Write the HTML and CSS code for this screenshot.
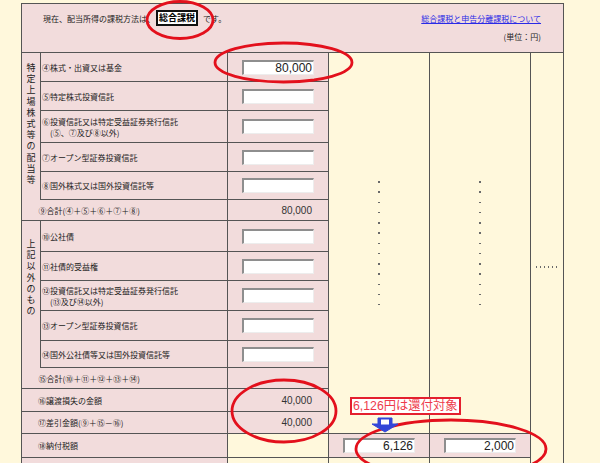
FILE: index.html
```html
<!DOCTYPE html>
<html lang="ja">
<head>
<meta charset="utf-8">
<title>配当所得</title>
<link rel="stylesheet" href="styles.css">
</head>
<body>
<table class="sheet">
  <colgroup>
    <col class="c1"><col class="c2"><col class="c3"><col class="c4"><col class="c5"><col class="c6">
  </colgroup>
  <tr class="h49">
    <td colspan="6" class="head">
      <div class="head-row">
        <p class="status">現在、配当所得の課税方法は、<span class="method">総合課税</span>です。</p>
        <a class="link" href="#">総合課税と申告分離課税について</a>
      </div>
      <div class="unit">(単位：円)</div>
    </td>
  </tr>
  <tr class="h29">
    <td rowspan="6" class="grp grp1"><span class="vlabel">特定上場株式等の配当等</span></td>
    <td class="item">④株式・出資又は基金</td>
    <td class="amt-cell"><input class="amt" type="text" value="80,000" readonly></td>
    <td rowspan="14" class="blank"><span class="vdots"></span></td>
    <td rowspan="14" class="blank"><span class="vdots"></span></td>
    <td rowspan="16" class="blank"><span class="hdots"></span></td>
  </tr>
  <tr class="h29">
    <td class="item">⑤特定株式投資信託</td>
    <td class="amt-cell"><input class="amt" type="text" value="" readonly></td>
  </tr>
  <tr class="h32">
    <td class="item">⑥投資信託又は特定受益証券発行信託<br>　(⑤、⑦及び⑧以外)</td>
    <td class="amt-cell"><input class="amt" type="text" value="" readonly></td>
  </tr>
  <tr class="h29">
    <td class="item">⑦オープン型証券投資信託</td>
    <td class="amt-cell"><input class="amt" type="text" value="" readonly></td>
  </tr>
  <tr class="h28">
    <td class="item">⑧国外株式又は国外投資信託等</td>
    <td class="amt-cell"><input class="amt" type="text" value="" readonly></td>
  </tr>
  <tr class="h21">
    <td class="item sum">⑨合計(④＋⑤＋⑥＋⑦＋⑧)</td>
    <td class="val">80,000</td>
  </tr>
  <tr class="h31">
    <td rowspan="6" class="grp grp2"><span class="vlabel">上記以外のもの</span></td>
    <td class="item">⑩公社債</td>
    <td class="amt-cell"><input class="amt" type="text" value="" readonly></td>
  </tr>
  <tr class="h29">
    <td class="item">⑪社債的受益権</td>
    <td class="amt-cell"><input class="amt" type="text" value="" readonly></td>
  </tr>
  <tr class="h30">
    <td class="item">⑫投資信託又は特定受益証券発行信託<br>　(⑬及び⑭以外)</td>
    <td class="amt-cell"><input class="amt" type="text" value="" readonly></td>
  </tr>
  <tr class="h30">
    <td class="item">⑬オープン型証券投資信託</td>
    <td class="amt-cell"><input class="amt" type="text" value="" readonly></td>
  </tr>
  <tr class="h27">
    <td class="item">⑭国外公社債等又は国外投資信託等</td>
    <td class="amt-cell"><input class="amt" type="text" value="" readonly></td>
  </tr>
  <tr class="h21">
    <td class="item sum">⑮合計(⑩＋⑪＋⑫＋⑬＋⑭)</td>
    <td class="val"></td>
  </tr>
  <tr class="h23">
    <td colspan="2" class="line">⑯譲渡損失の金額</td>
    <td class="val">40,000</td>
  </tr>
  <tr class="h22">
    <td colspan="2" class="line">⑰差引金額(⑨＋⑮－⑯)</td>
    <td class="val">40,000</td>
  </tr>
  <tr class="h24">
    <td colspan="2" class="line">⑱納付税額</td>
    <td class="blank"></td>
    <td class="amt-cell"><input class="amt" type="text" value="6,126" readonly></td>
    <td class="amt-cell"><input class="amt" type="text" value="2,000" readonly></td>
  </tr>
  <tr class="h24">
    <td colspan="2" class="line"></td>
    <td class="blank"></td>
    <td class="blank"></td>
    <td class="blank"></td>
  </tr>
</table>

<svg class="marks" width="600" height="463" viewBox="0 0 600 463">
  <g class="ring">
    <ellipse cx="180" cy="20" rx="33" ry="18.5"/>
    <ellipse cx="283.5" cy="62.5" rx="68.5" ry="19.5"/>
    <ellipse cx="284" cy="411" rx="52" ry="31"/>
    <ellipse cx="451" cy="449" rx="95" ry="29"/>
  </g>
  <polygon class="arrow" points="378,418 392,418 392,424 398,424 385,432 372,424 378,424"/>
  <rect class="arrow-in" x="381" y="419.5" width="8" height="5"/>
</svg>
<div class="callout">6,126円は還付対象</div>
</body>
</html>
```
FILE: styles.css
```css
* { box-sizing: border-box; }

body {
  margin: 0;
  width: 600px;
  height: 463px;
  overflow: hidden;
  position: relative;
  background: #fff8dc;
  font-family: "Noto Sans CJK JP", "Liberation Sans", sans-serif;
  color: #222;
}

.sheet {
  border-collapse: collapse;
  table-layout: fixed;
  width: 542px;
  margin: 3px 0 0 21px;
}

.c1 { width: 19px; }
.c2 { width: 187px; }
.c3 { width: 101px; }
.c4 { width: 101px; }
.c5 { width: 101px; }
.c6 { width: 33px; }

.sheet td {
  padding: 0;
  border: 1px solid #555;
  background: #f2dcdc;
  font-size: 8px;
  line-height: 11px;
  vertical-align: middle;
}

.h49 { height: 49px; }
.h32 { height: 32px; }
.h31 { height: 31px; }
.h30 { height: 30px; }
.h29 { height: 29px; }
.h28 { height: 28px; }
.h27 { height: 27px; }
.h24 { height: 24px; }
.h23 { height: 23px; }
.h22 { height: 22px; }
.h21 { height: 21px; }

.sheet td.head {
  vertical-align: top;
  padding: 6px 22px 0 21px;
}

.head-row {
  display: flex;
  justify-content: space-between;
  align-items: center;
  height: 16px;
}

.status {
  margin: 0;
  display: flex;
  align-items: center;
  font-size: 8px;
  line-height: 11px;
}

.method {
  display: inline-block;
  margin: 0 5px 0 1px;
  padding: 0 1px;
  height: 16px;
  border: 2px solid #111;
  background: #fff;
  color: #000;
  font-weight: bold;
  font-size: 9px;
  line-height: 12px;
}

.link {
  color: #2a2ae6;
  text-decoration: underline;
  font-size: 8px;
  line-height: 11px;
}

.unit {
  margin-top: 6px;
  text-align: right;
  font-size: 8px;
  line-height: 10px;
}

.sheet td.grp {
  vertical-align: top;
  text-align: center;
  border-right: none;
}

.grp1 { padding-top: 9px !important; }
.grp2 { padding-top: 17px !important; }

.vlabel {
  display: block;
  width: 9px;
  margin: 0 auto;
  font-size: 9px;
  line-height: 11.2px;
  word-break: break-all;
}

.sheet td.item { padding-left: 1px; }

.sheet td.sum {
  border-left: none;
  text-indent: -3px;
}

.sheet td.line { padding-left: 16px; }

.sheet td.val {
  text-align: right;
  padding-right: 16px;
  font-family: "Liberation Sans", sans-serif;
  font-size: 10px;
  color: #333;
}

.sheet td.amt-cell { text-align: center; }

.amt {
  display: block;
  margin: 0 auto;
  width: 72px;
  height: 15px;
  padding: 0 1px 0 0;
  border-style: solid;
  border-width: 2px 1px 1px 2px;
  border-color: #8e8e8e #ededed #ededed #8e8e8e;
  background: #fff;
  text-align: right;
  font-family: "Liberation Sans", sans-serif;
  font-size: 12px;
  line-height: 12px;
  color: #222;
  outline: none;
}

.sheet td.blank {
  background: #fff8dc;
  text-align: center;
}

.vdots {
  display: block;
  margin: 0 auto;
  width: 1.5px;
  height: 124.5px;
  background: repeating-linear-gradient(to bottom, #6a6a6a 0 1.5px, transparent 1.5px 10.25px);
}

.hdots {
  display: block;
  margin: 0 auto;
  width: 21.5px;
  height: 1.5px;
  background: repeating-linear-gradient(to right, #6a6a6a 0 1.5px, transparent 1.5px 4px);
}

.marks {
  position: absolute;
  left: 0;
  top: 0;
  pointer-events: none;
}

.ring ellipse {
  fill: none;
  stroke: #e3101c;
  stroke-width: 2.8;
}

.arrow {
  fill: #3346d8;
  stroke: #3346d8;
  stroke-width: 1;
  stroke-linejoin: round;
}

.arrow-in { fill: #fff; }

.callout {
  position: absolute;
  left: 350px;
  top: 397px;
  height: 18px;
  padding: 0 1px;
  border: 2px solid #e4202f;
  background: #fff;
  color: #ee3c4c;
  font-family: "Liberation Sans", "Noto Sans CJK JP", sans-serif;
  font-size: 12.3px;
  line-height: 14px;
  white-space: nowrap;
}
```
